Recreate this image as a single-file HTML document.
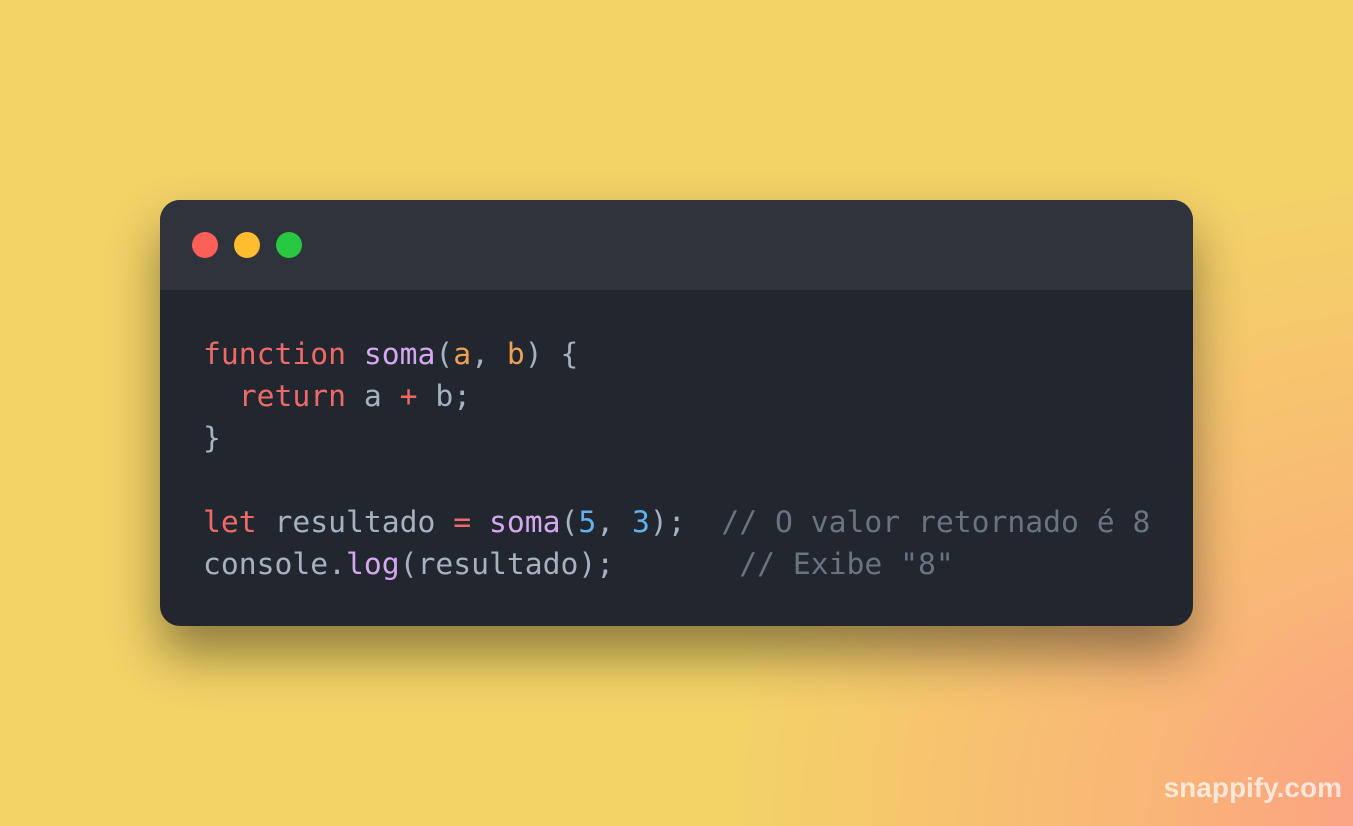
<!DOCTYPE html>
<html><head><meta charset="utf-8"><style>
html,body{margin:0;padding:0}
body{width:1353px;height:826px;overflow:hidden;position:relative;
background:radial-gradient(ellipse 700px 650px at 1420px 820px,#fc9e86 0%,#f9b676 40%,rgba(243,211,102,0) 100%),#f3d366;}
.card{position:absolute;left:160px;top:200px;width:1033px;height:426px;border-radius:20px;overflow:hidden;background:#22262e;
box-shadow:0 28px 50px rgba(20,20,20,0.45);}
.bar{height:90px;background:#2f333c;position:relative}
.dot{position:absolute;top:32px;width:26px;height:26px;border-radius:50%}
pre{margin:0;position:absolute;left:43px;top:134px;font-family:"DejaVu Sans Mono","Liberation Mono",monospace;font-size:29.7px;line-height:42px;color:#a6b2c0}
.k{color:#ef6a67}.f{color:#d5a7f0}.p{color:#f0a052}.n{color:#62b0f0}.c{color:#6a7480}
.wm{position:absolute;right:11px;bottom:22px;font-family:"Liberation Sans",sans-serif;font-weight:bold;font-size:28px;color:rgba(255,255,255,0.7)}
</style></head><body>
<div class="card">
<div class="bar">
<div class="dot" style="left:32px;background:#fe5f57"></div>
<div class="dot" style="left:74px;background:#febc2e"></div>
<div class="dot" style="left:116px;background:#28c840"></div>
</div>
<pre><span class="k">function</span> <span class="f">soma</span>(<span class="p">a</span>, <span class="p">b</span>) {
  <span class="k">return</span> a <span class="k">+</span> b;
}

<span class="k">let</span> resultado <span class="k">=</span> <span class="f">soma</span>(<span class="n">5</span>, <span class="n">3</span>);  <span class="c">// O valor retornado é 8</span>
console.<span class="f">log</span>(resultado);       <span class="c">// Exibe "8"</span></pre>
</div>
<div class="wm">snappify.com</div>
</body></html>
